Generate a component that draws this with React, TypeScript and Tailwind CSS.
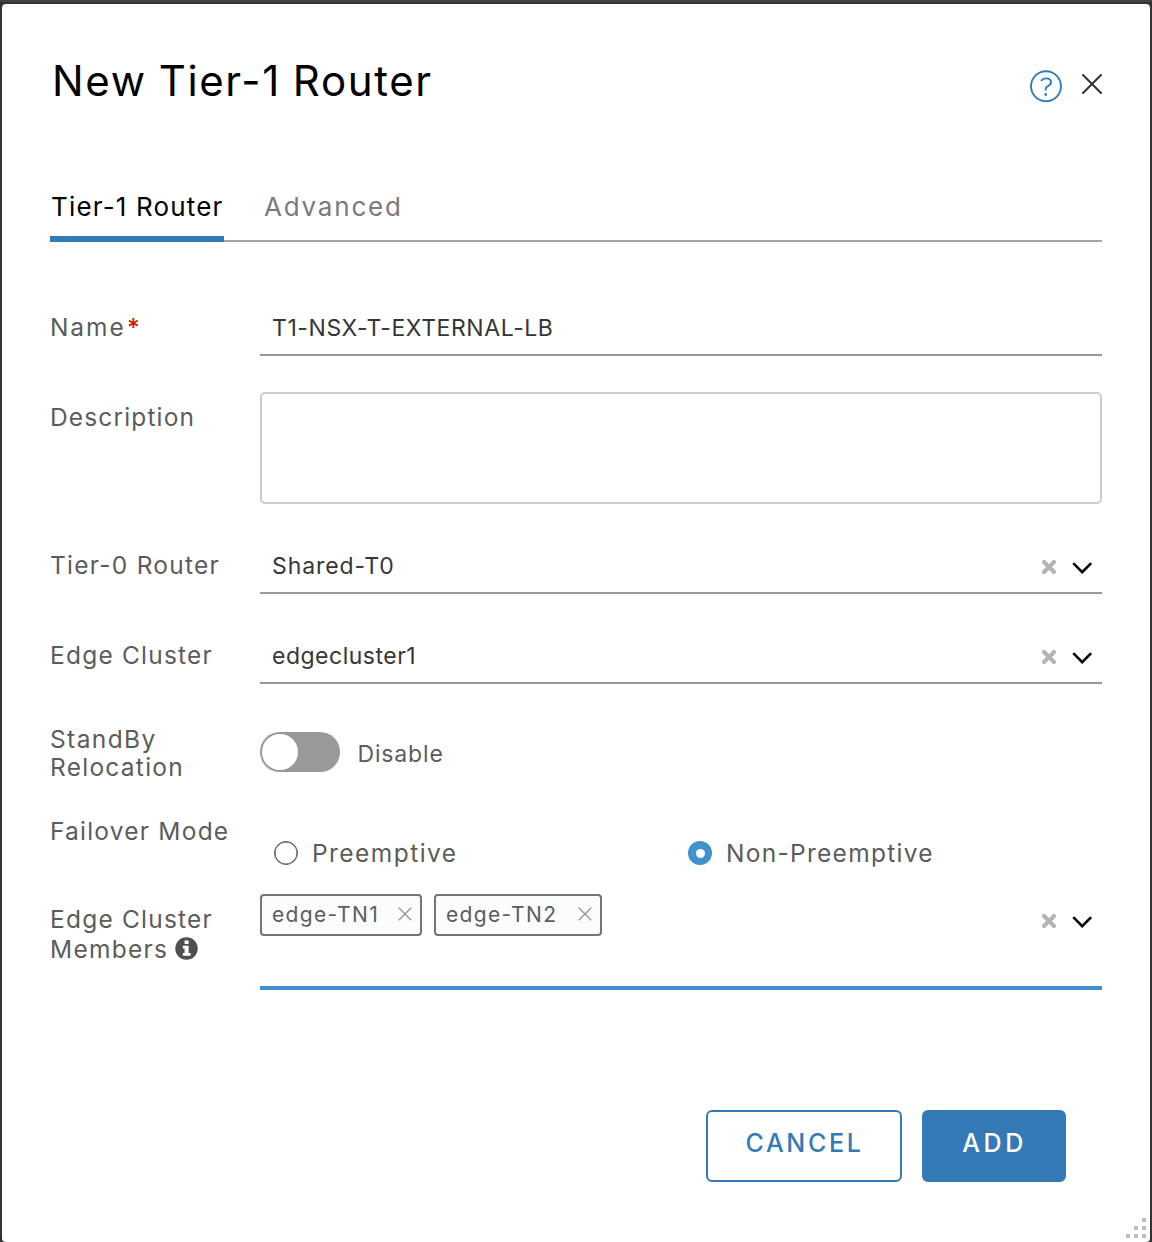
import React from "react";

function ClearIcon() {
  return (
    <svg width="16" height="16" viewBox="0 0 16 16" fill="none" stroke="#b3b5b4" strokeWidth="4.2" strokeLinecap="round">
      <path d="M3 3 L13 13 M13 3 L3 13" />
    </svg>
  );
}

function ChevronIcon() {
  return (
    <svg className="mt-[2px]" width="20" height="12" viewBox="0 0 20 12" fill="none" stroke="#000" strokeWidth="2.6" strokeLinecap="round">
      <path d="M2 1.9 L10.2 10.2 L18.4 1.9" />
    </svg>
  );
}

function SelectActions() {
  return (
    <div className="flex items-center gap-[15px] pr-[10px]">
      <ClearIcon />
      <ChevronIcon />
    </div>
  );
}

function Chip({ children, className }: { children: React.ReactNode; className: string }) {
  return (
    <div
      className={`flex h-[42px] items-center justify-between rounded-[4px] border-2 border-[#747474] bg-[#fbfdfc] pl-[10px] pr-[8px] text-[21px] text-[#5c5c5c] ${className}`}
    >
      <span className="-mt-px tracking-[1.35px] whitespace-nowrap">{children}</span>
      <svg className="-mt-[2px]" width="14" height="14" viewBox="0 0 14 14" fill="none" stroke="#8c8c8c" strokeWidth="1.1" strokeLinecap="round">
        <path d="M1 1 L13 13 M13 1 L1 13" />
      </svg>
    </div>
  );
}

export default function App() {
  return (
    <div className="h-[1242px] w-[1152px] border-t-2 border-[#444] bg-[#333] px-[2px] pt-[2px] font-[Inter,sans-serif] font-normal">
      <div className="relative flex h-[1238px] flex-col rounded-[4px] bg-white px-12 pt-[49px] text-[24.5px] text-[#5c5c5c]">
        <header className="flex h-14 justify-between">
          <h1 className="pl-[2px] text-[42px] leading-[56px] font-[370] tracking-[1.65px] [word-spacing:-1.5px] text-black">
            New Tier-1 Router
          </h1>
          <div className="flex items-start gap-[19px] pt-[17px]">
            <svg width="32" height="32" viewBox="0 0 32 32" fill="none" stroke="#2f7dbd" strokeWidth="1.9">
              <circle cx="16" cy="16.2" r="15" />
              <path d="M11 10.8 C12.4 9 14.2 8.4 16.1 8.4 C19 8.4 21 10 21 12.3 C21 14.7 19.2 15.7 17.5 16.4 C16.2 17 15.7 17.8 15.7 19 V20.4" />
              <circle cx="15.7" cy="24.5" r="1.4" fill="#2f7dbd" stroke="none" />
            </svg>
            <svg className="mt-[3px] mr-[-1px]" width="22" height="22" viewBox="0 0 22 22" fill="none" stroke="#313131" strokeWidth="2" strokeLinecap="round">
              <path d="M2 2 L20 20 M20 2 L2 20" />
            </svg>
          </div>
        </header>

        <nav className="mt-[78px] flex h-[55px] gap-[41px] text-[26px] leading-[40px] shadow-[inset_0_-2px_0_#a6a6a6]">
          <div className="w-[174px] border-b-6 border-[#347ab6] pl-px tracking-[1.16px] whitespace-nowrap text-black">
            Tier-1 Router
          </div>
          <div className="-ml-px tracking-[1.8px] text-[#7a7a7a]">Advanced</div>
        </nav>

        <div className="mt-[58px] grid h-14 grid-cols-[210px_842px]">
          <div className="flex leading-[54px]">
            <span className="tracking-[1.9px]">Name</span>
            <span className="ml-[1.5px] font-medium text-[#c92100]">*</span>
          </div>
          <div className="h-14 border-b-2 border-[#999] pl-3 text-[23px] leading-[56px] tracking-[0.58px] text-[#363636]">
            T1-NSX-T-EXTERNAL-LB
          </div>
        </div>

        <div className="mt-9 grid h-28 grid-cols-[210px_842px]">
          <div className="leading-[50px] tracking-[1.14px]">Description</div>
          <div className="rounded-[5px] border-2 border-[#ccc]" />
        </div>

        <div className="mt-[34px] grid h-14 grid-cols-[210px_842px]">
          <div className="leading-[54px] tracking-[1.25px]">Tier-0 Router</div>
          <div className="flex h-14 justify-between border-b-2 border-[#999] pl-3 text-[23px] text-[#363636]">
            <span className="leading-[56px] tracking-[0.9px]">Shared-T0</span>
            <div className="flex pt-1">
              <SelectActions />
            </div>
          </div>
        </div>

        <div className="mt-[34px] grid h-14 grid-cols-[210px_842px]">
          <div className="leading-[54px] tracking-[1.21px]">Edge Cluster</div>
          <div className="flex h-14 justify-between border-b-2 border-[#999] pl-3 text-[23px] text-[#363636]">
            <span className="leading-[56px] tracking-[0.5px]">edgecluster1</span>
            <div className="flex pt-1">
              <SelectActions />
            </div>
          </div>
        </div>

        <div className="mt-[41px] grid h-14 grid-cols-[210px_842px]">
          <div className="leading-7">
            <div className="tracking-[1.4px]">StandBy</div>
            <div className="tracking-[1.26px]">Relocation</div>
          </div>
          <div className="flex pt-[7px]">
            <div className="h-10 w-20 rounded-full bg-[#999] p-[2px]">
              <div className="size-9 rounded-full bg-white" />
            </div>
            <span className="ml-[17.5px] text-[23px] leading-[44px] tracking-[0.85px]">Disable</span>
          </div>
        </div>

        <div className="mt-[30px] grid h-[60px] grid-cols-[210px_842px]">
          <div className="leading-[40px] tracking-[1.22px] whitespace-nowrap">Failover Mode</div>
          <div className="grid h-6 translate-y-[30px] grid-cols-[414px_1fr] pl-[14px] leading-6">
            <div className="flex gap-[14px]">
              <span className="size-6 rounded-full border-[1.5px] border-[#565656] bg-white shadow-[inset_0_0_0_0.5px_#565656]" />
              <span className="tracking-[1.45px]">Preemptive</span>
            </div>
            <div className="flex gap-[14px]">
              <span className="flex size-6 items-center justify-center rounded-full bg-[#3f92ce]">
                <span className="size-[9px] rounded-full bg-white" />
              </span>
              <span className="tracking-[1.28px]">Non-Preemptive</span>
            </div>
          </div>
        </div>

        <div className="mt-[23px] grid h-24 grid-cols-[210px_842px]">
          <div className="pt-[10px] leading-[30px]">
            <div className="tracking-[1.21px]">Edge Cluster</div>
            <div className="flex items-center gap-[7px]">
              <span className="tracking-[1.28px]">Members</span>
              <svg className="mt-[-2px]" width="23" height="23" viewBox="0 0 24 24">
                <circle cx="12" cy="12" r="11.7" fill="#4f4f4f" />
                <path d="M10 3.6 H14.2 V7.4 H10 Z M8.2 9.2 H14.2 V16.8 H16.2 V19.6 H8.2 V16.8 H10 V12 H8.2 Z" fill="#fff" />
              </svg>
            </div>
          </div>
          <div className="flex justify-between border-b-4 border-[#3f92ce]">
            <div className="flex gap-3">
              <Chip className="w-[162px]">edge-TN1</Chip>
              <Chip className="w-[168px]">edge-TN2</Chip>
            </div>
            <div className="flex h-[54px]">
              <SelectActions />
            </div>
          </div>
        </div>

        <footer className="mt-[120px] flex h-[72px] justify-end gap-5 pr-9 text-[25px] leading-[62px] font-[480]">
          <button className="flex w-[196px] justify-center rounded-[6px] border-2 border-[#347ab6] pl-px tracking-[2.7px] text-[#347ab6]">
            CANCEL
          </button>
          <button className="flex w-[144px] justify-center rounded-[6px] border-2 border-[#347ab6] bg-[#347ab6] pl-px tracking-[3.6px] text-white">
            ADD
          </button>
        </footer>

        <svg className="absolute right-1 bottom-1" width="20" height="20" viewBox="0 0 20 20" fill="#bdbdbd">
          <path d="M16 0h4v4h-4z M8 8h4v4h-4z M16 8h4v4h-4z M0 16h4v4h-4z M8 16h4v4h-4z M16 16h4v4h-4z" />
        </svg>
      </div>
    </div>
  );
}
